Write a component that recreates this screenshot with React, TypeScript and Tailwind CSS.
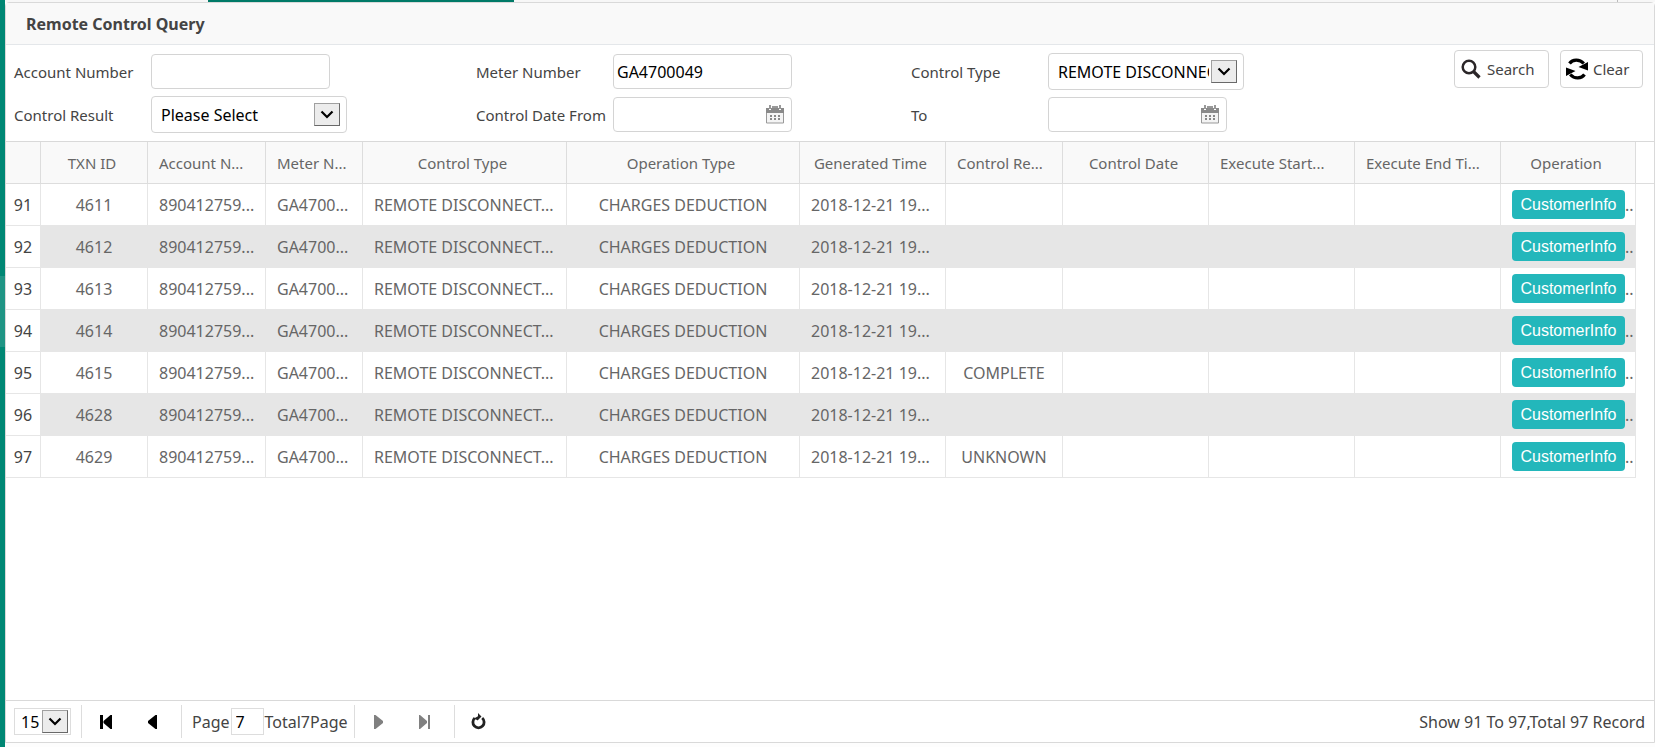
import type { ReactNode } from "react";

const columns = [
  { label: "TXN ID", width: "w-[107px]" },
  { label: "Account N...", title: "Account Number", width: "w-[118px]" },
  { label: "Meter N...", title: "Meter Number", width: "w-[97px]" },
  { label: "Control Type", width: "w-[204px]" },
  { label: "Operation Type", width: "w-[233px]" },
  { label: "Generated Time", width: "w-[146px]" },
  { label: "Control Re...", title: "Control Result", width: "w-[117px]" },
  { label: "Control Date", width: "w-[146px]" },
  { label: "Execute Start...", title: "Execute Start Time", width: "w-[146px]" },
  { label: "Execute End Ti...", title: "Execute End Time", width: "w-[146px]" },
  { label: "Operation", width: "w-[135px]" },
];

const rows = [
  { no: 91, id: "4611", result: "" },
  { no: 92, id: "4612", result: "" },
  { no: 93, id: "4613", result: "" },
  { no: 94, id: "4614", result: "" },
  { no: 95, id: "4615", result: "COMPLETE" },
  { no: 96, id: "4628", result: "" },
  { no: 97, id: "4629", result: "UNKNOWN" },
];

const box = "rounded border border-[#d4d4d4] bg-white outline-none";

function Arrow({ className }: { className: string }) {
  return (
    <span
      className={`pointer-events-none absolute flex h-[23px] w-[26px] items-center justify-center border border-t-[#a0a0a0] border-l-[#a0a0a0] border-r-[#696969] border-b-[#696969] bg-[#ececec] ${className}`}
    >
      <svg width="14" height="9" viewBox="0 0 14 9" fill="none" stroke="#000" strokeWidth="2.2">
        <path d="M1.5 1.5 7 7l5.500-5.500" />
      </svg>
    </span>
  );
}

function SelectBox({ id, option }: { id: string; option: string }) {
  return (
    <div className="relative w-[196px]">
      <select id={id} className={`${box} block h-[37px] w-full appearance-none pr-[34px] pl-[9px] text-black`}>
        <option>{option}</option>
      </select>
      <Arrow className="top-[7px] right-[7px]" />
    </div>
  );
}

function DateBox({ id }: { id: string }) {
  return (
    <div className="relative w-[179px]">
      <input id={id} type="text" className={`${box} block h-[35px] w-full pr-8 pl-1 text-black`} />
      <button type="button" aria-label="Pick a date" className="absolute top-2 right-2">
        <svg width="18" height="19" viewBox="0 0 18 19">
          <path d="M.5 6v12h17V6" fill="#f4f4f4" stroke="#999" />
          <path d="M0 3h3v2h2V3h8v2h2V3h3v5H0z" fill="#8a8a8a" />
          <path d="M3 0h2v4H3zM6 1h6v2H6zM13 0h2v4h-2z" fill="#999" />
          <path d="M4 10h2v2H4zm4 0h2v2H8zm4 0h2v2h-2zM4 13h2v2H4zm4 0h2v2H8zm4 0h2v2h-2z" fill="#888" />
        </svg>
      </button>
    </div>
  );
}

function Label({ htmlFor, children }: { htmlFor: string; children: ReactNode }) {
  return (
    <label htmlFor={htmlFor} className="text-[15px] whitespace-nowrap">
      {children}
    </label>
  );
}

function Cell({ clipped, children }: { clipped?: boolean; children?: ReactNode }) {
  return (
    <td
      className={`border-r border-b border-[#e6e6e6] whitespace-nowrap group-even:bg-[#e6e6e6] ${clipped ? "pl-[11px] text-left" : "text-center"}`}
    >
      {children}
    </td>
  );
}

function Separator() {
  return <span className="h-[33px] w-px bg-[#ddd]" />;
}

function PagerButton({ label, muted, children }: { label: string; muted?: boolean; children: ReactNode }) {
  return (
    <button
      type="button"
      aria-label={label}
      className={`flex h-8 w-[47px] items-center justify-center ${muted ? "text-[#808080]" : "text-black"}`}
    >
      {children}
    </button>
  );
}

export default function App() {
  return (
    <div className="flex min-h-screen bg-[#fdfdfd] font-['Noto_Sans',sans-serif] text-base leading-6 text-[#444]">
      <div className="flex w-[5px] shrink-0 flex-col bg-[#008774]">
        <div className="mt-[276px] h-[71px] bg-[#1f9484]" />
      </div>
      <div className="flex min-w-0 flex-1 flex-col pb-1">
        <div className="flex h-[2px] bg-[#f7f7f7]">
          <div className="ml-[203px] w-[306px] bg-[#007a68]" />
          <div className="mr-[37px] ml-auto w-px bg-[#bbb]" />
        </div>
        <main className="flex flex-1 flex-col rounded-t border border-[#d9d9d9] bg-white">
          <h1 className="flex h-[42px] items-center border-b border-[#e4e7ea] bg-[#f9f9f9] px-5 font-bold">
            Remote Control Query
          </h1>

          <form className="flex justify-between gap-[6px] py-[5px] pr-[11px] pl-2">
            <div className="grid flex-1 grid-cols-[137px_325fr_137px_298fr_137px_400fr] grid-rows-[43px_43px] items-center">
              <Label htmlFor="account">Account Number</Label>
              <input id="account" type="text" className={`${box} h-[35px] w-[179px] px-1 text-black`} />
              <Label htmlFor="meter">Meter Number</Label>
              <input
                id="meter"
                type="text"
                defaultValue="GA4700049"
                className={`${box} h-[35px] w-[179px] px-[3px] text-black`}
              />
              <Label htmlFor="type">Control Type</Label>
              <SelectBox id="type" option="REMOTE DISCONNECTION" />
              <Label htmlFor="result">Control Result</Label>
              <SelectBox id="result" option="Please Select" />
              <Label htmlFor="from">Control Date From</Label>
              <DateBox id="from" />
              <Label htmlFor="to">To</Label>
              <DateBox id="to" />
            </div>
            <div className="flex items-start gap-[11px] text-[15px]">
              <button type="button" className={`${box} flex h-[38px] w-[95px] items-center gap-[6px] pl-[6px]`}>
                <svg width="20" height="20" viewBox="0 0 20 20" fill="none" stroke="#2b2628">
                  <circle cx="8" cy="8" r="6.300" strokeWidth="2.500" />
                  <path d="m12.500 12.500 6 6" strokeWidth="3.200" />
                </svg>
                Search
              </button>
              <button type="button" className={`${box} flex h-[38px] w-[83px] items-center gap-[5px] pl-[5px]`}>
                <svg width="22" height="22" viewBox="0 0 22 22">
                  <path
                    d="M3.500 5.500C6.500 1.200 13.500.8 17.800 5.500M18.500 16.500C15.500 20.800 8.500 21.200 4.200 16.500"
                    fill="none"
                    stroke="#000"
                    strokeWidth="3.200"
                  />
                  <path d="M22 4v8.500L12.500 9zM0 18V9.500L9.500 13z" fill="#000" />
                </svg>
                Clear
              </button>
            </div>
          </form>

          <table className="w-full table-fixed border-separate border-spacing-0 border-t border-[#d9d9d9] text-center text-[#666]">
            <thead>
              <tr className="h-[42px] text-[15px]">
                <th className="w-[35px] border-r border-b border-[#ddd] bg-[#f9f9f9]" aria-label="Row" />
                {columns.map((c) => (
                  <th
                    key={c.label}
                    title={c.title}
                    className={`${c.width} border-r border-b border-[#ddd] bg-[#f9f9f9] font-normal whitespace-nowrap ${c.title ? "pl-[11px] text-left" : "pr-1 text-center"}`}
                  >
                    {c.label}
                  </th>
                ))}
                <td className="w-[18px] border-b border-[#ddd]" />
              </tr>
            </thead>
            <tbody>
              {rows.map((r) => (
                <tr key={r.no} className="group h-[42px]">
                  <td className="border-r border-b border-[#e6e6e6] text-[#444]">{r.no}</td>
                  <Cell>{r.id}</Cell>
                  <Cell clipped>890412759...</Cell>
                  <Cell clipped>GA4700...</Cell>
                  <Cell clipped>REMOTE DISCONNECT...</Cell>
                  <Cell>CHARGES DEDUCTION</Cell>
                  <Cell clipped>2018-12-21 19...</Cell>
                  <Cell>{r.result}</Cell>
                  <Cell />
                  <Cell />
                  <Cell />
                  <td className="border-r border-b border-[#e6e6e6] pl-[11px] group-even:bg-[#e6e6e6]">
                    <div className="flex items-center">
                      <button
                        type="button"
                        className="h-[29px] w-[113px] shrink-0 rounded bg-[#23b7bb] font-['Liberation_Sans',sans-serif] text-white"
                      >
                        CustomerInfo
                      </button>
                      <span>..</span>
                    </div>
                  </td>
                  <td />
                </tr>
              ))}
            </tbody>
          </table>

          <footer className="mt-auto flex h-[42px] items-center border-t border-[#d9d9d9] pr-[9px] pl-2">
            <div className="relative mr-[10px] w-[57px]">
              <select
                aria-label="Rows per page"
                className="block h-[27px] w-full appearance-none border border-[#ddd] bg-white pl-[6px] text-black"
              >
                <option>15</option>
              </select>
              <Arrow className="top-[2px] right-[3px]" />
            </div>
            <Separator />
            <div className="mr-[5px] flex">
              <PagerButton label="First page">
                <svg width="12" height="14" viewBox="0 0 12 14" fill="currentColor">
                  <path d="M0 0h3v14H0zM12 0v14h-1.500L3.500 8V6l7-6z" />
                </svg>
              </PagerButton>
              <PagerButton label="Previous page">
                <svg width="9" height="14" viewBox="0 0 9 14" fill="currentColor">
                  <path d="M9 0v14H7.500L0 8V6l7.500-6z" />
                </svg>
              </PagerButton>
            </div>
            <Separator />
            <label htmlFor="page" className="ml-[10px]">
              Page
            </label>
            <input
              id="page"
              type="text"
              defaultValue="7"
              className="mx-px h-[27px] w-[33px] border border-[#ddd] pl-1 text-black outline-none"
            />
            <span className="mr-[6px]">Total7Page</span>
            <Separator />
            <div className="mr-[5px] flex">
              <PagerButton label="Next page" muted>
                <svg width="9" height="14" viewBox="0 0 9 14" fill="currentColor">
                  <path d="M0 0v14h1.500L9 8V6L1.500 0z" />
                </svg>
              </PagerButton>
              <PagerButton label="Last page" muted>
                <svg width="12" height="14" viewBox="0 0 12 14" fill="currentColor">
                  <path d="M9 0h2v14H9zM0 0v14h1L8 8V6L1 0z" />
                </svg>
              </PagerButton>
            </div>
            <Separator />
            <PagerButton label="Reload">
              <svg width="15" height="17" viewBox="0 0 15 17">
                <path d="M3.800 5A5.600 5.600 0 1 0 11.200 5" fill="none" stroke="#222" strokeWidth="2.800" />
                <path d="M7 0v7.500L3 5.500 7 3.200zM7 0l3.500 3.500L7 7z" fill="#222" />
              </svg>
            </PagerButton>
            <span className="ml-auto">Show 91 To 97,Total 97 Record</span>
          </footer>
        </main>
      </div>
    </div>
  );
}
